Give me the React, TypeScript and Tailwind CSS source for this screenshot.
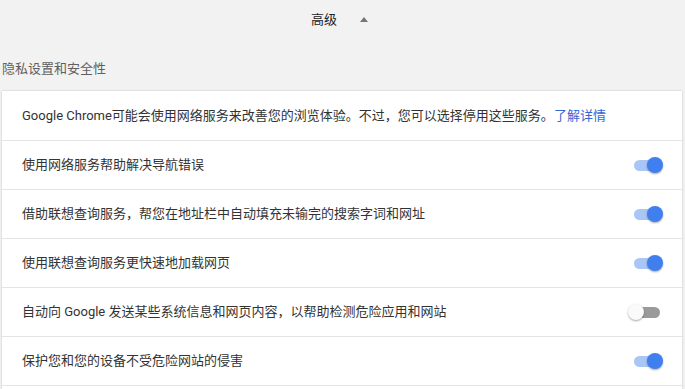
const rows: { label: string; on: boolean }[] = [
  { label: '使用网络服务帮助解决导航错误', on: true },
  { label: '借助联想查询服务，帮您在地址栏中自动填充未输完的搜索字词和网址', on: true },
  { label: '使用联想查询服务更快速地加载网页', on: true },
  { label: '自动向 Google 发送某些系统信息和网页内容，以帮助检测危险应用和网站', on: false },
  { label: '保护您和您的设备不受危险网站的侵害', on: true },
];

function Toggle({ on }: { on: boolean }) {
  return (
    <div className="relative w-[32px] h-[16px] flex items-center">
      <div className={`ml-[4px] h-[11px] w-[26px] rounded-full ${on ? 'bg-[#a9c6f7]' : 'bg-[#9a9a9a]'}`} />
      <div
        className={`absolute top-0 w-[16px] h-[16px] rounded-full shadow-[0_1px_2px_rgba(0,0,0,0.35)] ${
          on ? 'right-[-1px] bg-[#3f7ff0]' : 'left-[-2px] bg-[#fafafa]'
        }`}
      />
    </div>
  );
}

export default function App() {
  return (
    <div
      className="w-[685px] h-[389px] overflow-hidden bg-[#f2f2f2] text-[#333]"
      style={{ fontFamily: "Roboto, 'Noto Sans CJK SC', sans-serif" }}
    >
      <div className="h-[40px] flex items-center justify-center gap-[23px] pr-[6px]">
        <span className="text-[13px] text-[#222]">高级</span>
        <svg width="8" height="5" viewBox="0 0 8 5" className="mt-[-1px]">
          <path d="M0 5 L4 0 L8 5 Z" fill="#757575" />
        </svg>
      </div>
      <div className="h-[51px] pt-[16px] pl-[2px]">
        <span className="text-[13px] text-[#5f5f5f] whitespace-nowrap">隐私设置和安全性</span>
      </div>
      <div className="ml-[2px] w-[680px] bg-white shadow-[0_0_2px_rgba(0,0,0,0.2)]">
        <div className="h-[49px] flex items-center pl-[20px] pr-[20px]">
          <span className="text-[13px] whitespace-nowrap">
            Google Chrome可能会使用网络服务来改善您的浏览体验。不过，您可以选择停用这些服务。
            <span className="text-[#3367d6]">了解详情</span>
          </span>
        </div>
        {rows.map((r) => (
          <div
            key={r.label}
            className="h-[49px] flex items-center justify-between border-t border-[#e3e3e8] pl-[20px] pr-[20px]"
          >
            <span className="text-[13px] whitespace-nowrap">{r.label}</span>
            <Toggle on={r.on} />
          </div>
        ))}
        <div className="h-[20px] border-t border-[#e3e3e8]" />
      </div>
    </div>
  );
}
